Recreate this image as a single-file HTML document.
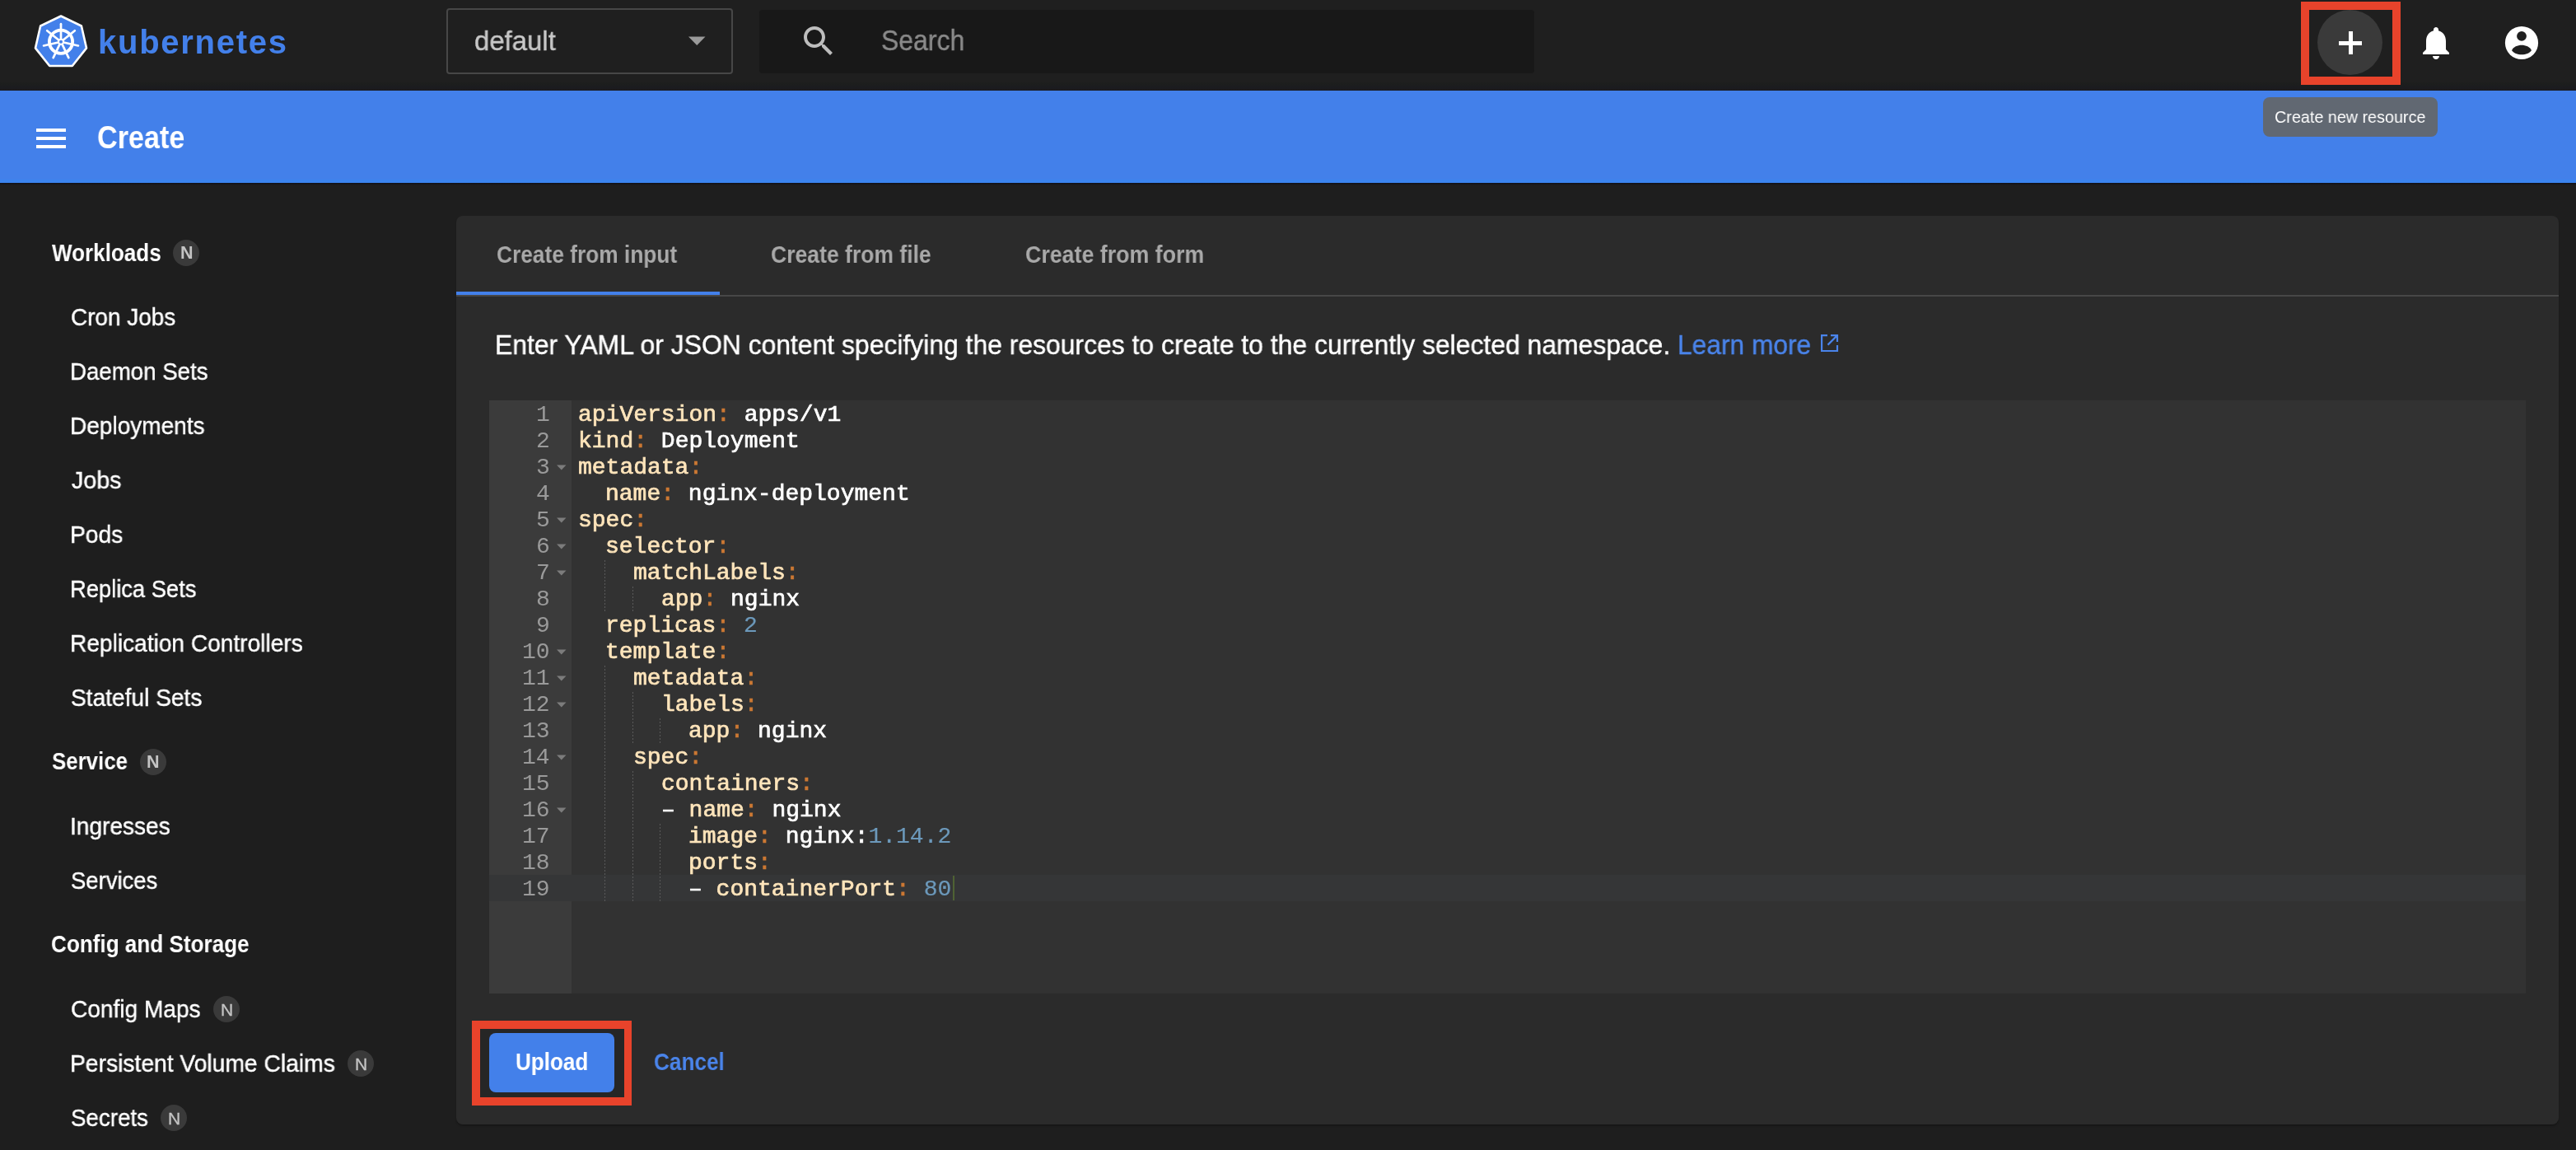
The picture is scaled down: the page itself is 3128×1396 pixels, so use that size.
<!DOCTYPE html><html><head><meta charset="utf-8"><style>
html,body{margin:0;padding:0;}
body{width:3128px;height:1396px;overflow:hidden;position:relative;background:#1e1e1e;font-family:"Liberation Sans",sans-serif;}
.t{position:absolute;white-space:pre;will-change:transform;}
.a{position:absolute;}
</style></head><body>
<div class="a" style="left:0;top:0;width:3128px;height:110px;background:#1f1f1f"></div>
<div class="a" style="left:0;top:100px;width:3128px;height:10px;background:linear-gradient(#1d1f1d,#1a1a20)"></div>
<div class="a" style="left:0;top:110px;width:3128px;height:112px;background:#4380ea"></div>
<div class="a" style="left:0;top:218px;width:3128px;height:4px;background:#3b84ef"></div>
<div class="a" style="left:0;top:222px;width:3128px;height:3px;background:linear-gradient(#101018,#1e1e1e)"></div>
<svg class="a" style="left:40px;top:16px" width="68" height="68" viewBox="0 0 68 68">
<polygon points="34.00,3.50 58.86,15.47 65.00,42.38 47.80,63.95 20.20,63.95 3.00,42.38 9.14,15.47" fill="#4380ea" stroke="#fff" stroke-width="2.6" stroke-linejoin="round"/>
<circle cx="34" cy="34.7" r="14.1" stroke="#fff" stroke-width="3.8" fill="none"/>
<g stroke="#fff" stroke-width="2.7" stroke-linecap="round">
<line x1="34" y1="34.7" x2="34.00" y2="13.20"/>
<line x1="34" y1="34.7" x2="50.81" y2="21.29"/>
<line x1="34" y1="34.7" x2="54.96" y2="39.48"/>
<line x1="34" y1="34.7" x2="43.33" y2="54.07"/>
<line x1="34" y1="34.7" x2="24.67" y2="54.07"/>
<line x1="34" y1="34.7" x2="13.04" y2="39.48"/>
<line x1="34" y1="34.7" x2="17.19" y2="21.29"/>
</g>
<circle cx="34" cy="34.7" r="4" fill="#fff"/>
<circle cx="34" cy="34.7" r="2" fill="#4380ea"/>
</svg>
<div class="t" style="left:119.20px;top:27.44px;font-size:40px;line-height:48px;color:#4380ea;font-weight:700;font-family:'Liberation Sans', sans-serif;letter-spacing:1.73px;">kubernetes</div>
<div class="a" style="left:542px;top:10px;width:344px;height:76px;border:2px solid #474747;border-radius:4px;"></div>
<div class="t" style="left:575.73px;top:28.72px;font-size:34px;line-height:41px;color:#c8c8c8;font-weight:400;font-family:'Liberation Sans', sans-serif;transform:scaleX(0.9672);transform-origin:0 0;-webkit-text-stroke:0.4px currentColor;">default</div>
<svg class="a" style="left:836px;top:44px" width="21" height="12"><polygon points="0,0.5 20.5,0.5 10.25,11" fill="#9a9a9a"/></svg>
<div class="a" style="left:922px;top:12px;width:941px;height:77px;background:#181818;border-radius:4px"></div>
<svg class="a" style="left:970px;top:26px" width="48" height="48" viewBox="0 0 24 24"><path fill="#bdbdbd" d="M15.5 14h-.79l-.28-.27C15.41 12.59 16 11.11 16 9.5 16 5.91 13.09 3 9.5 3S3 5.91 3 9.5 5.91 16 9.5 16c1.61 0 3.09-.59 4.23-1.57l.27.28v.79l5 4.99L20.49 19l-4.99-5zm-6 0C7.01 14 5 11.99 5 9.5S7.01 5 9.5 5 14 7.01 14 9.5 11.99 14 9.5 14z"/></svg>
<div class="t" style="left:1069.89px;top:27.87px;font-size:35px;line-height:42px;color:#8a8a8a;font-weight:400;font-family:'Liberation Sans', sans-serif;transform:scaleX(0.9130);transform-origin:0 0;-webkit-text-stroke:0.4px currentColor;">Search</div>
<div class="a" style="left:2794px;top:2px;width:101px;height:81px;border:10px solid #e8432b"></div>
<div class="a" style="left:2814px;top:12px;width:79px;height:79px;border-radius:50%;background:#3a3a3a"></div>
<div class="a" style="left:2840px;top:49.5px;width:28px;height:5px;background:#fff"></div>
<div class="a" style="left:2851.5px;top:38px;width:5px;height:28px;background:#fff"></div>
<svg class="a" style="left:2934px;top:28px" width="48" height="48" viewBox="0 0 24 24"><path fill="#fff" d="M12 22c1.1 0 2-.9 2-2h-4c0 1.1.9 2 2 2zm6-6v-5c0-3.07-1.63-5.64-4.5-6.32V4c0-.83-.67-1.5-1.5-1.5s-1.5.67-1.5 1.5v.68C7.64 5.36 6 7.92 6 11v5l-2 2v1h16v-1l-2-2z"/></svg>
<svg class="a" style="left:3038px;top:28px" width="48" height="48" viewBox="0 0 48 48">
<circle cx="24" cy="24" r="20.1" fill="#fff"/>
<circle cx="24" cy="15.8" r="5.9" fill="#1f1f1f"/>
<path d="M12 33 C16 24.5, 32 24.5, 36 33 C32 40, 16 40, 12 33 Z" fill="#1f1f1f"/>
</svg>
<div class="a" style="left:2748px;top:118px;width:212px;height:48px;background:#616872;border-radius:8px"></div>
<div class="t" style="left:2762.04px;top:129.10px;font-size:20.5px;line-height:25px;color:#fff;font-weight:400;font-family:'Liberation Sans', sans-serif;transform:scaleX(0.9636);transform-origin:0 0;">Create new resource</div>
<div class="a" style="left:44px;top:156px;width:36px;height:4.3px;background:#fff"></div>
<div class="a" style="left:44px;top:166px;width:36px;height:4.3px;background:#fff"></div>
<div class="a" style="left:44px;top:176px;width:36px;height:4.3px;background:#fff"></div>
<div class="t" style="left:117.92px;top:143.39px;font-size:39px;line-height:47px;color:#fff;font-weight:700;font-family:'Liberation Sans', sans-serif;transform:scaleX(0.8755);transform-origin:0 0;">Create</div>
<div class="t" style="left:62.50px;top:288.50px;font-size:30px;line-height:36px;color:#fff;font-weight:700;font-family:'Liberation Sans', sans-serif;transform:scaleX(0.8683);transform-origin:0 0;">Workloads</div>
<div class="a" style="left:210.2px;top:290.9px;width:32px;height:32px;border-radius:50%;background:#3a3a3a"></div>
<div class="t" style="left:219.00px;top:293.95px;font-size:21.5px;line-height:26px;color:#c4c4c4;font-weight:700;font-family:'Liberation Sans', sans-serif;">N</div>
<div class="t" style="left:85.94px;top:368.05px;font-size:29px;line-height:35px;color:#fff;font-weight:400;font-family:'Liberation Sans', sans-serif;transform:scaleX(0.9620);transform-origin:0 0;-webkit-text-stroke:0.4px currentColor;">Cron Jobs</div>
<div class="t" style="left:84.99px;top:434.05px;font-size:29px;line-height:35px;color:#fff;font-weight:400;font-family:'Liberation Sans', sans-serif;transform:scaleX(0.9532);transform-origin:0 0;-webkit-text-stroke:0.4px currentColor;">Daemon Sets</div>
<div class="t" style="left:84.97px;top:500.05px;font-size:29px;line-height:35px;color:#fff;font-weight:400;font-family:'Liberation Sans', sans-serif;transform:scaleX(0.9662);transform-origin:0 0;-webkit-text-stroke:0.4px currentColor;">Deployments</div>
<div class="t" style="left:86.90px;top:566.05px;font-size:29px;line-height:35px;color:#fff;font-weight:400;font-family:'Liberation Sans', sans-serif;transform:scaleX(0.9859);transform-origin:0 0;-webkit-text-stroke:0.4px currentColor;">Jobs</div>
<div class="t" style="left:84.95px;top:632.05px;font-size:29px;line-height:35px;color:#fff;font-weight:400;font-family:'Liberation Sans', sans-serif;transform:scaleX(0.9733);transform-origin:0 0;-webkit-text-stroke:0.4px currentColor;">Pods</div>
<div class="t" style="left:85.01px;top:698.05px;font-size:29px;line-height:35px;color:#fff;font-weight:400;font-family:'Liberation Sans', sans-serif;transform:scaleX(0.9426);transform-origin:0 0;-webkit-text-stroke:0.4px currentColor;">Replica Sets</div>
<div class="t" style="left:84.96px;top:764.05px;font-size:29px;line-height:35px;color:#fff;font-weight:400;font-family:'Liberation Sans', sans-serif;transform:scaleX(0.9691);transform-origin:0 0;-webkit-text-stroke:0.4px currentColor;">Replication Controllers</div>
<div class="t" style="left:85.93px;top:830.05px;font-size:29px;line-height:35px;color:#fff;font-weight:400;font-family:'Liberation Sans', sans-serif;transform:scaleX(0.9691);transform-origin:0 0;-webkit-text-stroke:0.4px currentColor;">Stateful Sets</div>
<div class="t" style="left:62.50px;top:906.40px;font-size:30px;line-height:36px;color:#fff;font-weight:700;font-family:'Liberation Sans', sans-serif;transform:scaleX(0.8617);transform-origin:0 0;">Service</div>
<div class="a" style="left:169.5px;top:908.8px;width:32px;height:32px;border-radius:50%;background:#3a3a3a"></div>
<div class="t" style="left:178.30px;top:911.85px;font-size:21.5px;line-height:26px;color:#c4c4c4;font-weight:700;font-family:'Liberation Sans', sans-serif;">N</div>
<div class="t" style="left:84.96px;top:986.05px;font-size:29px;line-height:35px;color:#fff;font-weight:400;font-family:'Liberation Sans', sans-serif;transform:scaleX(0.9681);transform-origin:0 0;-webkit-text-stroke:0.4px currentColor;">Ingresses</div>
<div class="t" style="left:85.95px;top:1052.05px;font-size:29px;line-height:35px;color:#fff;font-weight:400;font-family:'Liberation Sans', sans-serif;transform:scaleX(0.9462);transform-origin:0 0;-webkit-text-stroke:0.4px currentColor;">Services</div>
<div class="t" style="left:61.63px;top:1128.40px;font-size:30px;line-height:36px;color:#fff;font-weight:700;font-family:'Liberation Sans', sans-serif;transform:scaleX(0.8695);transform-origin:0 0;">Config and Storage</div>
<div class="t" style="left:85.93px;top:1208.05px;font-size:29px;line-height:35px;color:#fff;font-weight:400;font-family:'Liberation Sans', sans-serif;transform:scaleX(0.9678);transform-origin:0 0;-webkit-text-stroke:0.4px currentColor;">Config Maps</div>
<div class="a" style="left:258.6px;top:1208.8px;width:32px;height:32px;border-radius:50%;background:#3a3a3a"></div>
<div class="t" style="left:267.80px;top:1212.52px;font-size:21px;line-height:25px;color:#c4c4c4;font-weight:400;font-family:'Liberation Sans', sans-serif;-webkit-text-stroke:0.3px currentColor;">N</div>
<div class="t" style="left:84.95px;top:1274.05px;font-size:29px;line-height:35px;color:#fff;font-weight:400;font-family:'Liberation Sans', sans-serif;transform:scaleX(0.9738);transform-origin:0 0;-webkit-text-stroke:0.4px currentColor;">Persistent Volume Claims</div>
<div class="a" style="left:421.8px;top:1274.8px;width:32px;height:32px;border-radius:50%;background:#3a3a3a"></div>
<div class="t" style="left:431.00px;top:1278.52px;font-size:21px;line-height:25px;color:#c4c4c4;font-weight:400;font-family:'Liberation Sans', sans-serif;-webkit-text-stroke:0.3px currentColor;">N</div>
<div class="t" style="left:85.94px;top:1340.05px;font-size:29px;line-height:35px;color:#fff;font-weight:400;font-family:'Liberation Sans', sans-serif;transform:scaleX(0.9554);transform-origin:0 0;-webkit-text-stroke:0.4px currentColor;">Secrets</div>
<div class="a" style="left:195.0px;top:1340.8px;width:32px;height:32px;border-radius:50%;background:#3a3a3a"></div>
<div class="t" style="left:204.20px;top:1344.52px;font-size:21px;line-height:25px;color:#c4c4c4;font-weight:400;font-family:'Liberation Sans', sans-serif;-webkit-text-stroke:0.3px currentColor;">N</div>
<div class="a" style="left:554px;top:261.5px;width:2553px;height:1103.5px;background:#2b2b2b;border-radius:8px;box-shadow:0 2px 2px rgba(0,0,0,0.25)"></div>
<div class="a" style="left:554px;top:358px;width:2553px;height:2px;background:#474747"></div>
<div class="a" style="left:554px;top:354px;width:320px;height:4px;background:#4380ea"></div>
<div class="t" style="left:603.49px;top:292.45px;font-size:29px;line-height:35px;color:#a9a9a9;font-weight:700;font-family:'Liberation Sans', sans-serif;transform:scaleX(0.9069);transform-origin:0 0;">Create from input</div>
<div class="t" style="left:936.38px;top:292.45px;font-size:29px;line-height:35px;color:#a9a9a9;font-weight:700;font-family:'Liberation Sans', sans-serif;transform:scaleX(0.9154);transform-origin:0 0;">Create from file</div>
<div class="t" style="left:1245.48px;top:292.45px;font-size:29px;line-height:35px;color:#a9a9a9;font-weight:700;font-family:'Liberation Sans', sans-serif;transform:scaleX(0.9231);transform-origin:0 0;">Create from form</div>
<div class="t" style="left:601.04px;top:399.64px;font-size:32.5px;line-height:39px;color:#fff;font-weight:400;font-family:'Liberation Sans', sans-serif;transform:scaleX(0.9806);transform-origin:0 0;-webkit-text-stroke:0.4px currentColor;">Enter YAML or JSON content specifying the resources to create to the currently selected namespace.</div>
<div class="t" style="left:2036.85px;top:399.64px;font-size:32.5px;line-height:39px;color:#4a84ea;font-weight:400;font-family:'Liberation Sans', sans-serif;transform:scaleX(0.9760);transform-origin:0 0;-webkit-text-stroke:0.4px currentColor;">Learn more</div>
<svg class="a" style="left:2208px;top:403px" width="27" height="27" viewBox="0 0 27 27"><g fill="none" stroke="#4a84ea" stroke-width="2.2"><path d="M11 4.1H4.1V23H23V16"/><path d="M15 4.1H23V12M23 4.1L11.5 15.6"/></g></svg>
<div class="a" style="left:594px;top:486px;width:2473px;height:720px;background:#323232"></div>
<div class="a" style="left:594px;top:486px;width:100px;height:720px;background:#3b3b3b"></div>
<div class="a" style="left:694px;top:1062px;width:2373px;height:32px;background:#353637"></div>
<div class="a" style="left:594px;top:1062px;width:100px;height:32px;background:#353637"></div>
<div class="t" style="left:650.65px;top:487.5px;font-size:28px;line-height:32px;color:#9a9a9a;font-family:'Liberation Mono', monospace">1</div>
<div class="t" style="left:701.60px;top:487.5px;font-size:28px;line-height:32px;font-family:'Liberation Mono', monospace;font-weight:400;-webkit-text-stroke:0.7px currentColor"><span style="color:#ffe5bb">apiVersion</span><span style="color:#cc7833">:</span><span style="color:#ffffff"> apps/v1</span></div>
<div class="t" style="left:650.65px;top:519.5px;font-size:28px;line-height:32px;color:#9a9a9a;font-family:'Liberation Mono', monospace">2</div>
<div class="t" style="left:701.60px;top:519.5px;font-size:28px;line-height:32px;font-family:'Liberation Mono', monospace;font-weight:400;-webkit-text-stroke:0.7px currentColor"><span style="color:#ffe5bb">kind</span><span style="color:#cc7833">:</span><span style="color:#ffffff"> Deployment</span></div>
<div class="t" style="left:650.65px;top:551.5px;font-size:28px;line-height:32px;color:#9a9a9a;font-family:'Liberation Mono', monospace">3</div>
<svg class="a" style="left:675.5px;top:564.0px" width="12" height="7"><polygon points="0,0.5 11.5,0.5 5.75,6.5" fill="#7c7c7c"/></svg>
<div class="t" style="left:701.60px;top:551.5px;font-size:28px;line-height:32px;font-family:'Liberation Mono', monospace;font-weight:400;-webkit-text-stroke:0.7px currentColor"><span style="color:#ffe5bb">metadata</span><span style="color:#cc7833">:</span></div>
<div class="t" style="left:650.65px;top:583.5px;font-size:28px;line-height:32px;color:#9a9a9a;font-family:'Liberation Mono', monospace">4</div>
<div class="t" style="left:735.30px;top:583.5px;font-size:28px;line-height:32px;font-family:'Liberation Mono', monospace;font-weight:400;-webkit-text-stroke:0.7px currentColor"><span style="color:#ffe5bb">name</span><span style="color:#cc7833">:</span><span style="color:#ffffff"> nginx-deployment</span></div>
<div class="t" style="left:650.65px;top:615.5px;font-size:28px;line-height:32px;color:#9a9a9a;font-family:'Liberation Mono', monospace">5</div>
<svg class="a" style="left:675.5px;top:628.0px" width="12" height="7"><polygon points="0,0.5 11.5,0.5 5.75,6.5" fill="#7c7c7c"/></svg>
<div class="t" style="left:701.60px;top:615.5px;font-size:28px;line-height:32px;font-family:'Liberation Mono', monospace;font-weight:400;-webkit-text-stroke:0.7px currentColor"><span style="color:#ffe5bb">spec</span><span style="color:#cc7833">:</span></div>
<div class="t" style="left:650.65px;top:647.5px;font-size:28px;line-height:32px;color:#9a9a9a;font-family:'Liberation Mono', monospace">6</div>
<svg class="a" style="left:675.5px;top:660.0px" width="12" height="7"><polygon points="0,0.5 11.5,0.5 5.75,6.5" fill="#7c7c7c"/></svg>
<div class="t" style="left:735.30px;top:647.5px;font-size:28px;line-height:32px;font-family:'Liberation Mono', monospace;font-weight:400;-webkit-text-stroke:0.7px currentColor"><span style="color:#ffe5bb">selector</span><span style="color:#cc7833">:</span></div>
<div class="t" style="left:650.65px;top:679.5px;font-size:28px;line-height:32px;color:#9a9a9a;font-family:'Liberation Mono', monospace">7</div>
<svg class="a" style="left:675.5px;top:692.0px" width="12" height="7"><polygon points="0,0.5 11.5,0.5 5.75,6.5" fill="#7c7c7c"/></svg>
<div class="a" style="left:734.00px;top:679.5px;width:1px;height:32px;background:repeating-linear-gradient(#5a5a5a 0 2px, transparent 2px 4px)"></div>
<div class="t" style="left:769.00px;top:679.5px;font-size:28px;line-height:32px;font-family:'Liberation Mono', monospace;font-weight:400;-webkit-text-stroke:0.7px currentColor"><span style="color:#ffe5bb">matchLabels</span><span style="color:#cc7833">:</span></div>
<div class="t" style="left:650.65px;top:711.5px;font-size:28px;line-height:32px;color:#9a9a9a;font-family:'Liberation Mono', monospace">8</div>
<div class="a" style="left:734.00px;top:711.5px;width:1px;height:32px;background:repeating-linear-gradient(#5a5a5a 0 2px, transparent 2px 4px)"></div>
<div class="a" style="left:767.70px;top:711.5px;width:1px;height:32px;background:repeating-linear-gradient(#5a5a5a 0 2px, transparent 2px 4px)"></div>
<div class="t" style="left:802.70px;top:711.5px;font-size:28px;line-height:32px;font-family:'Liberation Mono', monospace;font-weight:400;-webkit-text-stroke:0.7px currentColor"><span style="color:#ffe5bb">app</span><span style="color:#cc7833">:</span><span style="color:#ffffff"> nginx</span></div>
<div class="t" style="left:650.65px;top:743.5px;font-size:28px;line-height:32px;color:#9a9a9a;font-family:'Liberation Mono', monospace">9</div>
<div class="t" style="left:735.30px;top:743.5px;font-size:28px;line-height:32px;font-family:'Liberation Mono', monospace;font-weight:400;-webkit-text-stroke:0.7px currentColor"><span style="color:#ffe5bb">replicas</span><span style="color:#cc7833">:</span><span style="color:#ffffff"> </span><span style="color:#6c99bb;-webkit-text-stroke:0.2px currentColor">2</span></div>
<div class="t" style="left:633.80px;top:775.5px;font-size:28px;line-height:32px;color:#9a9a9a;font-family:'Liberation Mono', monospace">10</div>
<svg class="a" style="left:675.5px;top:788.0px" width="12" height="7"><polygon points="0,0.5 11.5,0.5 5.75,6.5" fill="#7c7c7c"/></svg>
<div class="t" style="left:735.30px;top:775.5px;font-size:28px;line-height:32px;font-family:'Liberation Mono', monospace;font-weight:400;-webkit-text-stroke:0.7px currentColor"><span style="color:#ffe5bb">template</span><span style="color:#cc7833">:</span></div>
<div class="t" style="left:633.80px;top:807.5px;font-size:28px;line-height:32px;color:#9a9a9a;font-family:'Liberation Mono', monospace">11</div>
<svg class="a" style="left:675.5px;top:820.0px" width="12" height="7"><polygon points="0,0.5 11.5,0.5 5.75,6.5" fill="#7c7c7c"/></svg>
<div class="a" style="left:734.00px;top:807.5px;width:1px;height:32px;background:repeating-linear-gradient(#5a5a5a 0 2px, transparent 2px 4px)"></div>
<div class="t" style="left:769.00px;top:807.5px;font-size:28px;line-height:32px;font-family:'Liberation Mono', monospace;font-weight:400;-webkit-text-stroke:0.7px currentColor"><span style="color:#ffe5bb">metadata</span><span style="color:#cc7833">:</span></div>
<div class="t" style="left:633.80px;top:839.5px;font-size:28px;line-height:32px;color:#9a9a9a;font-family:'Liberation Mono', monospace">12</div>
<svg class="a" style="left:675.5px;top:852.0px" width="12" height="7"><polygon points="0,0.5 11.5,0.5 5.75,6.5" fill="#7c7c7c"/></svg>
<div class="a" style="left:734.00px;top:839.5px;width:1px;height:32px;background:repeating-linear-gradient(#5a5a5a 0 2px, transparent 2px 4px)"></div>
<div class="a" style="left:767.70px;top:839.5px;width:1px;height:32px;background:repeating-linear-gradient(#5a5a5a 0 2px, transparent 2px 4px)"></div>
<div class="t" style="left:802.70px;top:839.5px;font-size:28px;line-height:32px;font-family:'Liberation Mono', monospace;font-weight:400;-webkit-text-stroke:0.7px currentColor"><span style="color:#ffe5bb">labels</span><span style="color:#cc7833">:</span></div>
<div class="t" style="left:633.80px;top:871.5px;font-size:28px;line-height:32px;color:#9a9a9a;font-family:'Liberation Mono', monospace">13</div>
<div class="a" style="left:734.00px;top:871.5px;width:1px;height:32px;background:repeating-linear-gradient(#5a5a5a 0 2px, transparent 2px 4px)"></div>
<div class="a" style="left:767.70px;top:871.5px;width:1px;height:32px;background:repeating-linear-gradient(#5a5a5a 0 2px, transparent 2px 4px)"></div>
<div class="a" style="left:801.40px;top:871.5px;width:1px;height:32px;background:repeating-linear-gradient(#5a5a5a 0 2px, transparent 2px 4px)"></div>
<div class="t" style="left:836.40px;top:871.5px;font-size:28px;line-height:32px;font-family:'Liberation Mono', monospace;font-weight:400;-webkit-text-stroke:0.7px currentColor"><span style="color:#ffe5bb">app</span><span style="color:#cc7833">:</span><span style="color:#ffffff"> nginx</span></div>
<div class="t" style="left:633.80px;top:903.5px;font-size:28px;line-height:32px;color:#9a9a9a;font-family:'Liberation Mono', monospace">14</div>
<svg class="a" style="left:675.5px;top:916.0px" width="12" height="7"><polygon points="0,0.5 11.5,0.5 5.75,6.5" fill="#7c7c7c"/></svg>
<div class="a" style="left:734.00px;top:903.5px;width:1px;height:32px;background:repeating-linear-gradient(#5a5a5a 0 2px, transparent 2px 4px)"></div>
<div class="t" style="left:769.00px;top:903.5px;font-size:28px;line-height:32px;font-family:'Liberation Mono', monospace;font-weight:400;-webkit-text-stroke:0.7px currentColor"><span style="color:#ffe5bb">spec</span><span style="color:#cc7833">:</span></div>
<div class="t" style="left:633.80px;top:935.5px;font-size:28px;line-height:32px;color:#9a9a9a;font-family:'Liberation Mono', monospace">15</div>
<div class="a" style="left:734.00px;top:935.5px;width:1px;height:32px;background:repeating-linear-gradient(#5a5a5a 0 2px, transparent 2px 4px)"></div>
<div class="a" style="left:767.70px;top:935.5px;width:1px;height:32px;background:repeating-linear-gradient(#5a5a5a 0 2px, transparent 2px 4px)"></div>
<div class="t" style="left:802.70px;top:935.5px;font-size:28px;line-height:32px;font-family:'Liberation Mono', monospace;font-weight:400;-webkit-text-stroke:0.7px currentColor"><span style="color:#ffe5bb">containers</span><span style="color:#cc7833">:</span></div>
<div class="t" style="left:633.80px;top:967.5px;font-size:28px;line-height:32px;color:#9a9a9a;font-family:'Liberation Mono', monospace">16</div>
<svg class="a" style="left:675.5px;top:980.0px" width="12" height="7"><polygon points="0,0.5 11.5,0.5 5.75,6.5" fill="#7c7c7c"/></svg>
<div class="a" style="left:734.00px;top:967.5px;width:1px;height:32px;background:repeating-linear-gradient(#5a5a5a 0 2px, transparent 2px 4px)"></div>
<div class="a" style="left:767.70px;top:967.5px;width:1px;height:32px;background:repeating-linear-gradient(#5a5a5a 0 2px, transparent 2px 4px)"></div>
<div class="t" style="left:802.70px;top:967.5px;font-size:28px;line-height:32px;font-family:'Liberation Mono', monospace;font-weight:400;-webkit-text-stroke:0.7px currentColor"><span style="color:#ffffff">– </span><span style="color:#ffe5bb">name</span><span style="color:#cc7833">:</span><span style="color:#ffffff"> nginx</span></div>
<div class="t" style="left:633.80px;top:999.5px;font-size:28px;line-height:32px;color:#9a9a9a;font-family:'Liberation Mono', monospace">17</div>
<div class="a" style="left:734.00px;top:999.5px;width:1px;height:32px;background:repeating-linear-gradient(#5a5a5a 0 2px, transparent 2px 4px)"></div>
<div class="a" style="left:767.70px;top:999.5px;width:1px;height:32px;background:repeating-linear-gradient(#5a5a5a 0 2px, transparent 2px 4px)"></div>
<div class="a" style="left:801.40px;top:999.5px;width:1px;height:32px;background:repeating-linear-gradient(#5a5a5a 0 2px, transparent 2px 4px)"></div>
<div class="t" style="left:836.40px;top:999.5px;font-size:28px;line-height:32px;font-family:'Liberation Mono', monospace;font-weight:400;-webkit-text-stroke:0.7px currentColor"><span style="color:#ffe5bb">image</span><span style="color:#cc7833">:</span><span style="color:#ffffff"> nginx:</span><span style="color:#6c99bb;-webkit-text-stroke:0.2px currentColor">1.14.2</span></div>
<div class="t" style="left:633.80px;top:1031.5px;font-size:28px;line-height:32px;color:#9a9a9a;font-family:'Liberation Mono', monospace">18</div>
<div class="a" style="left:734.00px;top:1031.5px;width:1px;height:32px;background:repeating-linear-gradient(#5a5a5a 0 2px, transparent 2px 4px)"></div>
<div class="a" style="left:767.70px;top:1031.5px;width:1px;height:32px;background:repeating-linear-gradient(#5a5a5a 0 2px, transparent 2px 4px)"></div>
<div class="a" style="left:801.40px;top:1031.5px;width:1px;height:32px;background:repeating-linear-gradient(#5a5a5a 0 2px, transparent 2px 4px)"></div>
<div class="t" style="left:836.40px;top:1031.5px;font-size:28px;line-height:32px;font-family:'Liberation Mono', monospace;font-weight:400;-webkit-text-stroke:0.7px currentColor"><span style="color:#ffe5bb">ports</span><span style="color:#cc7833">:</span></div>
<div class="t" style="left:633.80px;top:1063.5px;font-size:28px;line-height:32px;color:#9a9a9a;font-family:'Liberation Mono', monospace">19</div>
<div class="a" style="left:734.00px;top:1063.5px;width:1px;height:32px;background:repeating-linear-gradient(#5a5a5a 0 2px, transparent 2px 4px)"></div>
<div class="a" style="left:767.70px;top:1063.5px;width:1px;height:32px;background:repeating-linear-gradient(#5a5a5a 0 2px, transparent 2px 4px)"></div>
<div class="a" style="left:801.40px;top:1063.5px;width:1px;height:32px;background:repeating-linear-gradient(#5a5a5a 0 2px, transparent 2px 4px)"></div>
<div class="t" style="left:836.40px;top:1063.5px;font-size:28px;line-height:32px;font-family:'Liberation Mono', monospace;font-weight:400;-webkit-text-stroke:0.7px currentColor"><span style="color:#ffffff">– </span><span style="color:#ffe5bb">containerPort</span><span style="color:#cc7833">:</span><span style="color:#ffffff"> </span><span style="color:#6c99bb;-webkit-text-stroke:0.2px currentColor">80</span></div>
<div class="a" style="left:1157px;top:1063px;width:2px;height:30px;background:#4f6233"></div>
<div class="a" style="left:573px;top:1238.7px;width:173.5px;height:83.6px;border:10px solid #e8432b"></div>
<div class="a" style="left:583px;top:1248.7px;width:174.5px;height:83.6px;background:#262626"></div>
<div class="a" style="left:594px;top:1254px;width:152px;height:72px;background:#4380ea;border-radius:8px"></div>
<div class="t" style="left:626.02px;top:1271.28px;font-size:29.5px;line-height:35px;color:#fff;font-weight:700;font-family:'Liberation Sans', sans-serif;transform:scaleX(0.8831);transform-origin:0 0;">Upload</div>
<div class="t" style="left:793.91px;top:1271.28px;font-size:29.5px;line-height:35px;color:#4a84ea;font-weight:700;font-family:'Liberation Sans', sans-serif;transform:scaleX(0.8864);transform-origin:0 0;">Cancel</div>
</body></html>
